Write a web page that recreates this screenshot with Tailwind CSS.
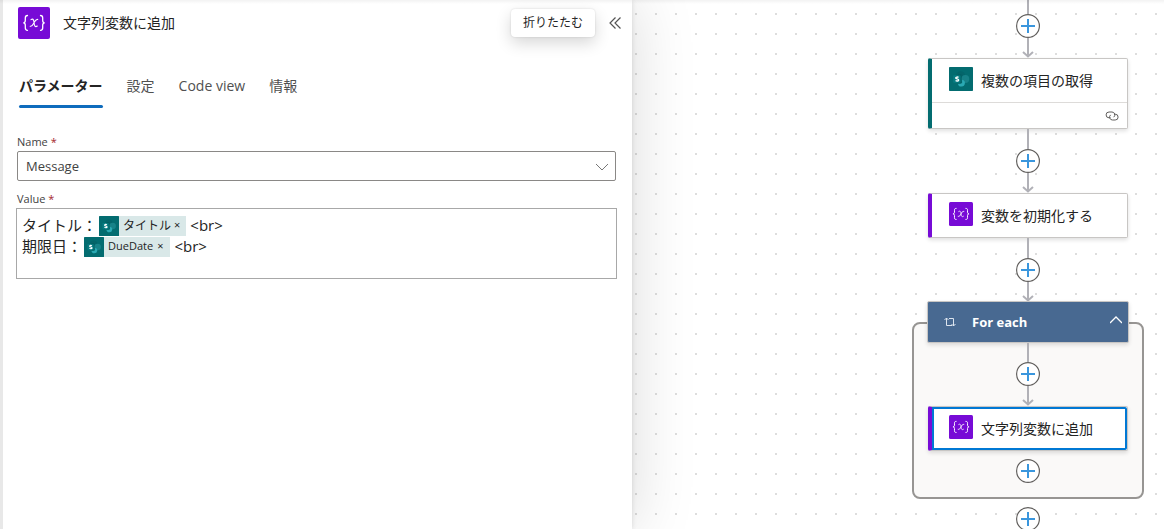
<!DOCTYPE html>
<html lang="ja">
<head>
<meta charset="utf-8">
<meta name="viewport" content="width=device-width, initial-scale=1">
<title>文字列変数に追加</title>
<script src="https://cdn.jsdelivr.net/npm/@tailwindcss/browser@4"></script>
</head>
<body class="bg-white text-[#242424] font-['Open_Sans','Noto_Sans_CJK_JP',sans-serif]">
<svg class="hidden" aria-hidden="true">
  <symbol id="plus" viewBox="0 0 24 24"><circle cx="12" cy="12" r="11.4" fill="#fff" stroke="#605e5c" stroke-width="1.2"/><path d="M12 5v14M5 12h14" stroke="#3a96dd" stroke-width="2"/></symbol>
  <symbol id="arrow" viewBox="0 0 12 20"><path d="M6 0v19" stroke="#b1b1b7" stroke-width="2"/><path d="M1 14l5 4.5 5-4.5" fill="none" stroke="#b1b1b7" stroke-width="2"/></symbol>
  <symbol id="variable" viewBox="0 0 32 32"><rect width="32" height="32" rx="2" fill="#770bd6"/><g fill="none" stroke="#fff" stroke-width="1.3" stroke-linecap="round"><path d="M9.5 8.5C7.4 8.5 7.3 9.6 7.3 11v2.5c0 1.6-.7 2.3-2 2.3 1.3 0 2 .7 2 2.3v2.7c0 1.4.1 2.5 2.2 2.5M22.5 8.5c2.1 0 2.2 1.1 2.2 2.500v2.500c0 1.600.7 2.300 2 2.300-1.300 0-2 .7-2 2.300v2.700c0 1.400-.1 2.500-2.200 2.500"/><path d="M13 12.600c2.400-1.600 2.900 1.200 3.100 3.400.2 2.600 1 4.700 3.200 3M19.800 12.400c-1.900-.6-3 1.900-3.900 3.600-.9 1.800-1.900 3.900-3.700 3.200" stroke-width="1.1"/></g></symbol>
  <symbol id="sharepoint" viewBox="0 0 32 32"><rect width="32" height="32" rx="1" fill="#036c70"/><circle cx="15.500" cy="11.500" r="6" fill="#04656a"/><circle cx="21.800" cy="16" r="5.200" fill="#178288"/><path d="M12 21.500h5.500V17a4.600 4.600 0 1 1-5.500 4.500z" fill="#2aa9b3"/><path d="M12 10h4.500v10.500a2 2 0 0 1-2 2H12z" fill="#025659" opacity=".6"/><rect x="5.500" y="11" width="10" height="10" rx="1" fill="#067b80"/><path d="M12.700 13.800c-1-.7-3.700-.6-3.700.9 0 1.600 3.900.9 3.900 2.700 0 1.600-2.900 1.600-4.100.7" fill="none" stroke="#fff" stroke-width="1.8"/></symbol>
</svg>
<div class="grid grid-cols-[632fr_532fr] min-h-screen overflow-hidden relative">
  <main class="relative z-10 bg-white border-l-3 border-[#e8e8e8] shadow-[0_0_5px_rgba(0,0,0,0.12),0_0_60px_rgba(0,0,0,0.15)]">
    <header class="flex items-center pt-[7px] pl-[15px] pr-[9px]">
      <svg class="w-8 h-8" aria-hidden="true"><use href="#variable"/></svg>
      <h1 class="ml-[13px] text-sm leading-5">文字列変数に追加</h1>
      <button class="ml-auto h-7 px-3 rounded bg-white text-xs leading-4 shadow-[0_0_2px_rgba(0,0,0,0.15),0_6px_16px_rgba(0,0,0,0.16)]">折りたたむ</button>
      <button class="ml-3 w-4 h-4" aria-label="折りたたむ"><svg viewBox="0 0 16 16" class="w-4 h-4" fill="none" stroke="#555" stroke-width="1.2"><path d="M8.500 2.500L3 8l5.500 5.500M13.500 2.500L8 8l5.500 5.500"/></svg></button>
    </header>
    <nav class="flex gap-6 mt-[37px] pl-4 text-sm leading-5 text-[#505050]" role="tablist">
      <button role="tab" aria-selected="true" class="flex flex-col gap-[9px] font-semibold text-[#242424]">パラメーター<span class="h-[3px] w-full rounded-full bg-[#0f6cbd]"></span></button>
      <button role="tab" aria-selected="false" class="self-start">設定</button>
      <button role="tab" aria-selected="false" class="self-start">Code view</button>
      <button role="tab" aria-selected="false" class="self-start">情報</button>
    </nav>
    <form class="mt-[26px] pl-3.5 pr-4">
      <label for="name" class="block text-[11px] leading-4 text-[#424242]">Name <span class="text-[#a4262c]">*</span></label>
      <div class="relative mt-px">
        <select id="name" class="appearance-none block w-full h-[30px] border border-[#8a8886] rounded-[2px] pt-0.5 px-2 text-[13px] text-[#424242] bg-white"><option>Message</option></select>
        <svg class="absolute right-2 top-2.5 w-3 h-3 pointer-events-none" viewBox="0 0 12 12" fill="none" stroke="#777"><path d="M0 3l6 6 6-6"/></svg>
      </div>
      <div id="value-label" class="mt-2.5 text-[11px] leading-4 text-[#424242]">Value <span class="text-[#a4262c]">*</span></div>
      <div role="textbox" contenteditable="true" aria-multiline="true" aria-labelledby="value-label" class="mt-px -mx-px min-h-[71px] border border-[#a8a8a8] px-[5px] py-1.5 text-[15px]">
        <p class="flex items-center h-[21px]">タイトル：<span class="flex items-center ml-0.5 mr-1 pr-1.5 h-5 bg-[#d9e8e8] text-xs" contenteditable="false"><svg class="w-5 h-5 mr-1"><use href="#sharepoint"/></svg>タイトル<button type="button" class="ml-[3px] text-[11px]" aria-label="タイトルを削除">×</button></span>&lt;br&gt;</p>
        <p class="flex items-center h-[21px]">期限日：<span class="flex items-center ml-0.5 mr-1 pr-[7px] h-5 bg-[#d9e8e8] text-[11px]" contenteditable="false"><svg class="w-5 h-5 mr-1"><use href="#sharepoint"/></svg>DueDate<button type="button" class="ml-1" aria-label="DueDate を削除">×</button></span>&lt;br&gt;</p>
      </div>
    </form>
  </main>
  <section class="relative flex justify-end pr-5 h-0 min-h-full" aria-label="フロー">
    <svg class="absolute inset-0 w-full h-full" aria-hidden="true"><defs><pattern id="dots" x="3" y="13" width="20" height="20" patternUnits="userSpaceOnUse"><rect width="2" height="2" fill="#ddd"/></pattern></defs><rect width="100%" height="100%" fill="url(#dots)"/></svg>
    <div class="relative flex flex-col items-center w-[232px] shrink-0 *:shrink-0">
      <div class="w-0.5 h-3.5 bg-[#b1b1b7]"></div>
      <button class="w-6 h-6" aria-label="アクションを追加"><svg class="w-6 h-6"><use href="#plus"/></svg></button>
      <svg class="w-3 h-5"><use href="#arrow"/></svg>
      <article class="w-[200px] border border-[#c8c6c4] border-l-4 border-l-[#036c70] rounded-[2px] bg-white shadow-[0_2px_4px_rgba(0,0,0,0.13)]">
        <div class="flex items-center h-[43px] pl-[17px] text-sm"><svg class="w-6 h-6 -mt-1"><use href="#sharepoint"/></svg><h2 class="ml-2">複数の項目の取得</h2></div>
        <div class="flex items-center justify-end h-[26px] pr-2 border-t border-[#dddbd9]"><svg class="w-3.5 h-3.5" viewBox="0 0 14 14" fill="none" stroke="#605e5c"><path d="M5.500 8.800H4A2.900 2.900 0 0 1 4 3h3a2.900 2.900 0 0 1 1.700 5.200"/><path d="M9 5.200h1.200a2.900 2.900 0 0 1 0 5.800H7.500a2.900 2.900 0 0 1-1.900-5.100"/></svg></div>
      </article>
      <div class="w-0.5 h-5 bg-[#b1b1b7]"></div>
      <button class="w-6 h-6" aria-label="アクションを追加"><svg class="w-6 h-6"><use href="#plus"/></svg></button>
      <svg class="w-3 h-5"><use href="#arrow"/></svg>
      <article class="flex items-center w-[200px] h-[45px] pl-[17px] text-sm border border-[#c8c6c4] border-l-4 border-l-[#770bd6] rounded-[2px] bg-white shadow-[0_2px_4px_rgba(0,0,0,0.13)]"><svg class="w-6 h-6 -mt-1"><use href="#variable"/></svg><h2 class="ml-2">変数を初期化する</h2></article>
      <div class="w-0.5 h-5 bg-[#b1b1b7]"></div>
      <button class="w-6 h-6" aria-label="アクションを追加"><svg class="w-6 h-6"><use href="#plus"/></svg></button>
      <svg class="w-3 h-5"><use href="#arrow"/></svg>
      <div class="w-full pt-5">
        <div class="flex flex-col items-center w-full pb-3.5 border-2 border-[#979593] rounded-lg bg-[#faf9f8]">
          <button aria-expanded="true" class="-mt-[23px] flex items-center w-[202px] h-[42px] pl-4 pr-1.5 rounded-[2px] border border-[#c8c6c4] bg-[#486991] text-white text-[13px] font-bold shadow-[0_2px_4px_rgba(0,0,0,0.13)]">
            <svg class="w-3 h-3" viewBox="0 0 12 12" fill="none" stroke="#dce4ee"><path d="M2.500 2v7.500H8M.5 4l2-2 2 2M5 2.500h4.500V10M7.500 8l2 2 2-2"/></svg>
            <span class="ml-4 pt-0.5">For each</span>
            <svg class="ml-auto w-3 h-3 -mt-1" viewBox="0 0 12 12" fill="none" stroke="#fff" stroke-width="1.3"><path d="M0 9l6-6 6 6"/></svg>
          </button>
          <div class="w-0.5 h-[19px] bg-[#b1b1b7]"></div>
          <button class="w-6 h-6" aria-label="アクションを追加"><svg class="w-6 h-6"><use href="#plus"/></svg></button>
          <svg class="w-3 h-5"><use href="#arrow"/></svg>
          <article class="flex w-[200px] h-[45px] border border-[#c8c6c4] border-l-4 border-l-[#770bd6] rounded-[2px] bg-white shadow-[0_2px_4px_rgba(0,0,0,0.13)]"><div class="flex items-center w-full pl-[17px] text-sm ring-2 ring-inset ring-[#0078d4] rounded-r-[2px]"><svg class="w-6 h-6 -mt-1"><use href="#variable"/></svg><h2 class="ml-2">文字列変数に追加</h2></div></article>
          <button class="mt-2 w-6 h-6" aria-label="アクションを追加"><svg class="w-6 h-6"><use href="#plus"/></svg></button>
        </div>
      </div>
      <button class="mt-2 w-6 h-6" aria-label="アクションを追加"><svg class="w-6 h-6"><use href="#plus"/></svg></button>
    </div>
  </section>
  <div class="absolute inset-x-0 top-0 z-20 h-1 bg-linear-to-b from-black/5 to-transparent pointer-events-none"></div>
</div>
</body>
</html>
